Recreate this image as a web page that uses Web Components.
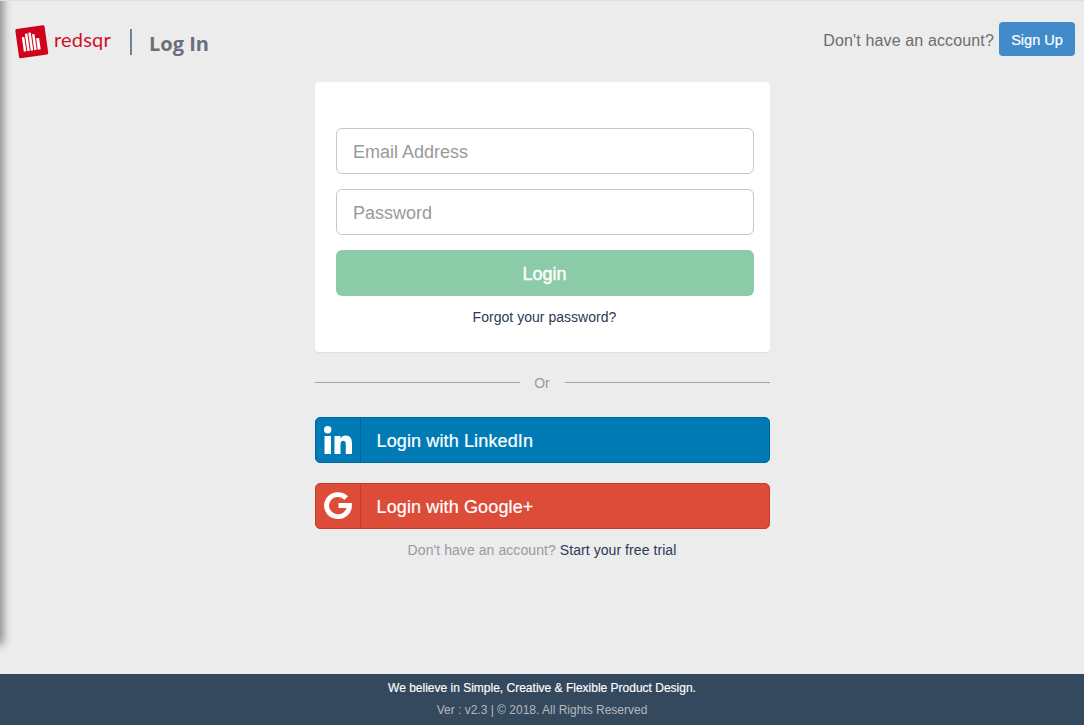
<!DOCTYPE html>
<html lang="en">
<head>
<meta charset="utf-8">
<title>redsqr - Log In</title>
<style>
  html, body { margin: 0; height: 100%; }
  body { background: #ececec; font-family: "Liberation Sans", Arial, sans-serif; }
</style>
</head>
<body>
<login-page>
  <top-bar slot="header"></top-bar>
  <login-card>
    <text-field placeholder="Email Address"></text-field>
    <text-field placeholder="Password"></text-field>
    <primary-button>Login</primary-button>
    <a slot="after" href="#">Forgot your password?</a>
  </login-card>
  <or-divider></or-divider>
  <social-button kind="linkedin">Login with LinkedIn</social-button>
  <social-button kind="google">Login with Google+</social-button>
  <trial-note></trial-note>
  <page-footer slot="footer"></page-footer>
</login-page>

<script>
/**
 * Small helper, makes an open shadow root from a html string.
 */
function shadow (el, html) {
  el.attachShadow({ mode: 'open' }).innerHTML = html
}

customElements.define('login-page', class extends HTMLElement {
  constructor () {
    super()
    shadow(this, `
      <style>
      :host {
        display: flex;
        flex-direction: column;
        height: 725px;
        box-sizing: border-box;
        border-top: 1px solid #dedede;
        position: relative;
        overflow: hidden;
      }
      main {
        flex: 1;
        width: 455px;
        margin: 0 auto;
        display: flex;
        flex-direction: column;
      }
      /* the edge of the collapsed side menu */
      .edge {
        position: absolute;
        left: -20px;
        top: -20px;
        width: 20px;
        height: 660px;
        box-shadow: 0 0 10px 3px rgba(0, 0, 0, .45);
      }
      </style>
      <div class="edge"></div>
      <slot name="header"></slot>
      <main><slot></slot></main>
      <slot name="footer"></slot>
    `)
  }
})

customElements.define('top-bar', class extends HTMLElement {
  constructor () {
    super()
    shadow(this, `
      <style>
      :host {
        display: flex;
        justify-content: space-between;
        height: 81px;
        box-sizing: border-box;
        padding: 21px 9px 0 14px;
      }
      .brand { display: flex; align-items: flex-start; }
      svg { display: block; margin-top: 2px; }
      .name {
        font: 400 20px Lato, sans-serif;
        letter-spacing: .2px;
        color: #d0112b;
        margin: 4px 0 0 5px;
        line-height: 26px;
        width: 58px;
      }
      .sep {
        width: 2px;
        height: 26px;
        background: #6f8296;
        margin: 7px 0 0 18px;
      }
      h1 {
        font: 700 20px "Open Sans", sans-serif;
        color: #6b6f7b;
        margin: 8px 0 0 17px;
        line-height: 28px;
      }
      .right { display: flex; align-items: flex-start; }
      .right span {
        font-size: 16px;
        letter-spacing: .14px;
        color: #6d6d6d;
        line-height: 38px;
        margin-right: 5px;
      }
      a {
        display: block;
        width: 76px;
        height: 34px;
        line-height: 36px;
        text-align: center;
        background: #428bca;
        color: #fff;
        font-size: 14.5px;
        border-radius: 4px;
        text-decoration: none;
        -webkit-text-stroke: .2px #fff;
      }
      </style>
      <div class="brand">
        <svg width="35" height="35" viewBox="0 0 35 35">
          <rect x="3" y="3" width="29.500" height="29.500" rx="1.500" fill="#d0021b" transform="rotate(-8 17.500 17.500)"/>
          <g fill="#fff" transform="rotate(-8 17.500 17.500)">
            <rect x="8.500" y="12" width="2.500" height="14.500"/>
            <rect x="12" y="9" width="2.500" height="17.500"/>
            <rect x="15.500" y="8.500" width="2.500" height="18"/>
            <rect x="19" y="10.500" width="2.500" height="16"/>
            <rect x="22.500" y="15" width="3" height="11.500"/>
          </g>
        </svg>
        <span class="name">redsqr</span>
        <div class="sep"></div>
        <h1>Log In</h1>
      </div>
      <div class="right">
        <span>Don't have an account?</span>
        <a href="#">Sign Up</a>
      </div>
    `)
  }
})

customElements.define('login-card', class extends HTMLElement {
  constructor () {
    super()
    shadow(this, `
      <style>
      :host {
        display: block;
        height: 270px;
        box-sizing: border-box;
        padding: 46px 16px 0 21px;
        background: #fff;
        border-radius: 4px;
        box-shadow: 0 1px 1px rgba(0, 0, 0, .06);
      }
      .fields { display: flex; flex-direction: column; gap: 15px; }
      .after { text-align: center; margin-top: 12px; line-height: 18px; font-size: 14px; letter-spacing: .03px; }
      ::slotted(a) { color: #2b3a55; text-decoration: none; }
      </style>
      <div class="fields"><slot></slot></div>
      <div class="after"><slot name="after"></slot></div>
    `)
  }
})

customElements.define('text-field', class extends HTMLElement {
  constructor () {
    super()
    shadow(this, `
      <style>
      :host { display: block; }
      input {
        display: block;
        width: 100%;
        height: 46px;
        box-sizing: border-box;
        padding: 2px 16.5px 0;
        border: 1px solid #c8c8c8;
        border-radius: 6px;
        background: #fff;
        font: 18px "Liberation Sans", Arial, sans-serif;
        outline: none;
      }
      input::placeholder { color: #999; opacity: 1; }
      </style>
      <input type="text" placeholder="${this.getAttribute('placeholder')}">
    `)
  }
})

customElements.define('primary-button', class extends HTMLElement {
  constructor () {
    super()
    shadow(this, `
      <style>
      :host {
        display: block;
        height: 46px;
        line-height: 48px;
        text-align: center;
        background: #8ccba8;
        color: #fff;
        font-size: 18px;
        -webkit-text-stroke: .4px #fff;
        border-radius: 6px;
      }
      </style>
      <slot></slot>
    `)
  }
})

customElements.define('or-divider', class extends HTMLElement {
  constructor () {
    super()
    shadow(this, `
      <style>
      :host {
        display: flex;
        align-items: center;
        height: 18px;
        margin: 21px 0 26px;
        color: #99999f;
        font-size: 14px;
      }
      i { flex: 1; height: 1px; background: #a2a2aa; }
      span { width: 45px; text-align: center; line-height: 20px; padding-top: 1px; }
      </style>
      <i></i><span>Or</span><i></i>
    `)
  }
})

const socialIcons = {
  linkedin: `<svg width="28" height="28" viewBox="0 0 28 28" fill="#fff" style="margin-top:-1px">
      <rect x="0.500" y="10" width="6.500" height="18"/>
      <circle cx="3.700" cy="3.700" r="3.700"/>
      <path d="M10.500 10h6v2.400c1-1.600 2.900-2.900 5.100-2.900C26.200 9.500 28 12.700 28 17.500V28h-6.200v-9.300c0-2.600-.7-4-2.500-4-2.100 0-2.800 1.600-2.800 4V28h-6z"/>
    </svg>`,
  google: `<svg width="28" height="27" viewBox="0 0 28 28" preserveAspectRatio="none" style="margin-top:-1px">
      <path d="M22.200 6.200A11.400 11.400 0 1 0 25.400 14H14.500" fill="none" stroke="#fff" stroke-width="5"/>
    </svg>`
}

customElements.define('social-button', class extends HTMLElement {
  constructor () {
    super()
    const kind = this.getAttribute('kind')
    shadow(this, `
      <style>
      :host {
        display: flex;
        height: 46px;
        box-sizing: border-box;
        margin-bottom: 20px;
        border-radius: 5px;
        color: #fff;
        font-size: 18px;
        letter-spacing: .13px;
        -webkit-text-stroke: .2px #fff;
      }
      :host([kind=linkedin]) { background: #007bb6; border: 1px solid #00669a; }
      :host([kind=google]) { background: #dd4b39; border: 1px solid #c23d2d; }
      .icon {
        width: 45px;
        flex: none;
        box-sizing: border-box;
        display: flex;
        align-items: center;
        justify-content: center;
      }
      :host([kind=linkedin]) .icon { border-right: 1px solid #00669a; }
      :host([kind=google]) .icon { border-right: 1px solid #c23d2d; }
      .label { padding-left: 16px; line-height: 46px; }
      </style>
      <div class="icon">${socialIcons[kind]}</div>
      <div class="label"><slot></slot></div>
    `)
  }
})

customElements.define('trial-note', class extends HTMLElement {
  constructor () {
    super()
    shadow(this, `
      <style>
      :host {
        display: block;
        margin-top: -9px;
        text-align: center;
        font-size: 14px;
        letter-spacing: .07px;
        line-height: 20px;
        color: #99999f;
      }
      a { color: #2b3a55; text-decoration: none; }
      </style>
      Don't have an account? <a href="#">Start your free trial</a>
    `)
  }
})

customElements.define('page-footer', class extends HTMLElement {
  constructor () {
    super()
    shadow(this, `
      <style>
      :host {
        display: block;
        height: 51px;
        box-sizing: border-box;
        padding-top: 5px;
        background: #34495e;
        text-align: center;
        font-size: 12px;
      }
      p { margin: 0; }
      .tag { color: #fff; line-height: 18px; -webkit-text-stroke: .15px #fff; }
      .ver { color: #b4b8bd; line-height: 18px; margin-top: 4px; }
      </style>
      <p class="tag">We believe in Simple, Creative &amp; Flexible Product Design.</p>
      <p class="ver">Ver : v2.3 | © 2018. All Rights Reserved</p>
    `)
  }
})
</script>
</body>
</html>
